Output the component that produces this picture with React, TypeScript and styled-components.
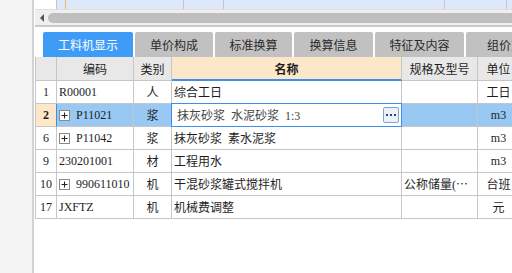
import React from "react";
import styled, { createGlobalStyle } from "styled-components";

const GlobalStyle = createGlobalStyle`
  html, body { margin: 0; padding: 0; background: #fff; }
  body {
    font-family: "Liberation Serif", "Noto Sans CJK SC", serif;
    font-size: 12px;
    color: #1e1e1e;
  }
  * { box-sizing: border-box; }
`;

const Page = styled.div`
  display: flex;
  width: 512px;
  height: 273px;
  overflow: hidden;
  background: #fff;
`;

const SidePanel = styled.div`
  flex: 0 0 34px;
  background: #f3f3f3;
  border-right: 2px solid #d3d3d3;
`;

const Main = styled.div`
  flex: 1;
  min-width: 0;
  display: flex;
  flex-direction: column;
  padding-left: 1px;
  overflow: hidden;
`;

const TopStrip = styled.div`
  display: flex;
  height: 10px;
  flex-shrink: 0;
  border-bottom: 1px solid #e0e0e0;
`;

const StripCell = styled.div<{ $w?: number; $line?: string; $bg?: string }>`
  flex: ${(p) => (p.$w ? `0 0 ${p.$w}px` : "1 1 auto")};
  background: ${(p) => p.$bg ?? "#dde8f9"};
  border-right: 1px solid ${(p) => p.$line ?? "#c6c6c6"};
`;

const ScrollBand = styled.div`
  height: 17px;
  flex-shrink: 0;
  display: flex;
  align-items: center;
  gap: 4px;
  padding-left: 5px;
  background: #efefef;
  border-bottom: 2px solid #cbcbcb;
`;

const ScrollArrow = styled.div`
  width: 0;
  height: 0;
  border-top: 4px solid transparent;
  border-bottom: 4px solid transparent;
  border-right: 4px solid #555;
`;

const ScrollTrack = styled.div`
  flex: 1;
  height: 10px;
  border-radius: 5px 0 0 5px;
  background: #bfbfbf;
`;

const TabBar = styled.div`
  display: flex;
  gap: 2px;
  height: 25px;
  margin-top: 5px;
  padding-left: 8px;
  flex-shrink: 0;
`;

const Tab = styled.div<{ $w: number; $active?: boolean }>`
  flex: 0 0 ${(p) => p.$w}px;
  display: flex;
  align-items: center;
  justify-content: center;
  border-radius: 2px 2px 0 0;
  background: ${(p) => (p.$active ? "#3f9cf6" : "#c1c1c1")};
  color: ${(p) => (p.$active ? "#fff" : "#2a2a2a")};
  font-family: "Noto Sans CJK SC", sans-serif;
  font-size: 12px;
  white-space: nowrap;
  overflow: hidden;
`;

const Grid = styled.div`
  display: grid;
  grid-template-columns: 21px 77px 38px 230px 76px 42px;
  width: max-content;
  border-left: 1px solid #c6c6c6;
  flex-shrink: 0;
`;

const HeadCell = styled.div<{ $accent?: boolean }>`
  height: 24px;
  display: flex;
  align-items: center;
  justify-content: center;
  background: ${(p) => (p.$accent ? "#fde7c9" : "#e8e8e8")};
  border-right: 1px solid #c6c6c6;
  border-bottom: ${(p) => (p.$accent ? "2px solid #3d8ef0" : "1px solid #c6c6c6")};
  font-family: "Noto Sans CJK SC", sans-serif;
  font-weight: ${(p) => (p.$accent ? 700 : 400)};
  color: #1e1e1e;
  white-space: nowrap;
  overflow: hidden;
`;

const Cell = styled.div<{ $align?: "left" | "center"; $selected?: boolean }>`
  height: 23px;
  display: flex;
  align-items: center;
  justify-content: ${(p) => (p.$align === "center" ? "center" : "flex-start")};
  gap: 6px;
  padding: 0 2px;
  background: ${(p) => (p.$selected ? "#99c9f3" : "#fff")};
  border-right: 1px solid #c6c6c6;
  border-bottom: 1px solid #c6c6c6;
  white-space: nowrap;
  overflow: hidden;
  word-spacing: 3px;
`;

const IndexCell = styled(Cell)<{ $current?: boolean }>`
  justify-content: center;
  background: ${(p) => (p.$current ? "#fde7c9" : "#fff")};
  border-right-color: ${(p) => (p.$current ? "#3d8ef0" : "#c6c6c6")};
  font-weight: ${(p) => (p.$current ? 700 : 400)};
`;

const EditCell = styled(Cell)`
  position: relative;
  z-index: 1;
  justify-content: space-between;
  padding: 0 2px 0 5px;
  background: #fff;
  color: #444;
  border-right-color: #3d8ef0;
  border-bottom-color: #3d8ef0;
  box-shadow: -1px 0 0 #3d8ef0, 0 -1px 0 #3d8ef0, -1px -1px 0 #3d8ef0;
`;

const EllipsisButton = styled.div`
  width: 16px;
  height: 16px;
  flex: 0 0 16px;
  display: flex;
  align-items: center;
  justify-content: center;
  border: 1px solid #7ea4d6;
  border-radius: 2px;
  background: #edf1f8;
`;

const ExpandBox = () => (
  <svg width="11" height="11" viewBox="0 0 11 11" style={{ flex: "0 0 11px" }}>
    <rect x="0.5" y="0.5" width="10" height="10" fill="#fff" stroke="#8a8a8a" />
    <line x1="2.5" y1="5.5" x2="8.5" y2="5.5" stroke="#222" />
    <line x1="5.5" y1="2.5" x2="5.5" y2="8.5" stroke="#222" />
  </svg>
);

const Dots = () => (
  <svg width="12" height="4" viewBox="0 0 12 4">
    <rect x="1" y="1" width="2" height="2" fill="#24477f" />
    <rect x="5" y="1" width="2" height="2" fill="#24477f" />
    <rect x="9" y="1" width="2" height="2" fill="#24477f" />
  </svg>
);

type Row = {
  idx: string;
  code: string;
  expand?: boolean;
  cat: string;
  name: string;
  spec: string;
  unit: string;
  current?: boolean;
};

const rows: Row[] = [
  { idx: "1", code: "R00001", cat: "人", name: "综合工日", spec: "", unit: "工日" },
  { idx: "2", code: "P11021", expand: true, cat: "浆", name: "抹灰砂浆 水泥砂浆 1:3", spec: "", unit: "m3", current: true },
  { idx: "6", code: "P11042", expand: true, cat: "浆", name: "抹灰砂浆 素水泥浆", spec: "", unit: "m3" },
  { idx: "9", code: "230201001", cat: "材", name: "工程用水", spec: "", unit: "m3" },
  { idx: "10", code: "990611010", expand: true, cat: "机", name: "干混砂浆罐式搅拌机", spec: "公称储量(⋯", unit: "台班" },
  { idx: "17", code: "JXFTZ", cat: "机", name: "机械费调整", spec: "", unit: "元" },
];

const tabs = [
  { label: "工料机显示", w: 90, active: true },
  { label: "单价构成", w: 78 },
  { label: "标准换算", w: 77 },
  { label: "换算信息", w: 79 },
  { label: "特征及内容", w: 89 },
  { label: "组价方案", w: 90 },
];

export default function App() {
  return (
    <>
      <GlobalStyle />
      <Page>
        <SidePanel />
        <Main>
          <TopStrip>
            <StripCell $w={22} $bg="#fff" />
            <StripCell $w={9} $line="#f2b36b" />
            <StripCell $w={118} />
            <StripCell $w={40} />
            <StripCell $w={221} />
            <StripCell $w={62} />
            <StripCell $line="transparent" />
          </TopStrip>
          <ScrollBand>
            <ScrollArrow />
            <ScrollTrack />
          </ScrollBand>
          <TabBar>
            {tabs.map((t) => (
              <Tab key={t.label} $w={t.w} $active={t.active}>
                {t.label}
              </Tab>
            ))}
          </TabBar>
          <Grid>
            <HeadCell />
            <HeadCell>编码</HeadCell>
            <HeadCell>类别</HeadCell>
            <HeadCell $accent>名称</HeadCell>
            <HeadCell>规格及型号</HeadCell>
            <HeadCell>单位</HeadCell>
            {rows.map((r) => (
              <React.Fragment key={r.idx}>
                <IndexCell $current={r.current}>{r.idx}</IndexCell>
                <Cell $selected={r.current}>
                  {r.expand && <ExpandBox />}
                  {r.code}
                </Cell>
                <Cell $align="center" $selected={r.current}>
                  {r.cat}
                </Cell>
                {r.current ? (
                  <EditCell>
                    <span>{r.name}</span>
                    <EllipsisButton>
                      <Dots />
                    </EllipsisButton>
                  </EditCell>
                ) : (
                  <Cell>{r.name}</Cell>
                )}
                <Cell $selected={r.current}>{r.spec}</Cell>
                <Cell $align="center" $selected={r.current}>
                  {r.unit}
                </Cell>
              </React.Fragment>
            ))}
          </Grid>
        </Main>
      </Page>
    </>
  );
}
